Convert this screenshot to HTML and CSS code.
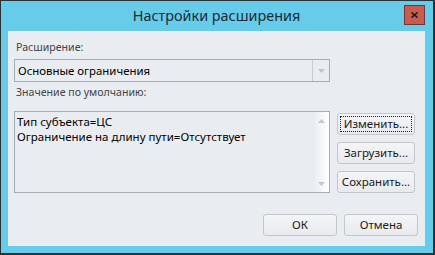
FILE: index.html
```html
<!DOCTYPE html>
<html lang="ru">
<head>
<meta charset="utf-8">
<title>Настройки расширения</title>
<link rel="stylesheet" href="styles.css">
</head>
<body>
<div class="window">
  <div class="titlebar">
    <div class="title">Настройки расширения</div>
    <button class="close" aria-label="Закрыть">
      <svg width="7" height="6" viewBox="0 0 7 6"><path d="M0.5 0.5 L6.5 5.5 M6.5 0.5 L0.5 5.5" stroke="#1a1a1a" stroke-width="1.6"/></svg>
    </button>
  </div>
  <div class="client">
    <div class="label">Расширение:</div>
    <div class="combo">
      <span class="combo-text">Основные ограничения</span>
      <span class="combo-btn"><svg width="7" height="4" viewBox="0 0 7 4"><path d="M0 0 H7 L3.5 4 Z" fill="#bfc2c6"/></svg></span>
    </div>
    <div class="label label2">Значение по умолчанию:</div>
    <div class="main-row">
      <div class="textbox">
        <div class="lines">
          <div>Тип субъекта=ЦС</div>
          <div>Ограничение на длину пути=Отсутствует</div>
        </div>
        <div class="scrollbar">
          <svg width="7" height="4" viewBox="0 0 7 4"><path d="M0 4 H7 L3.5 0 Z" fill="#c4c7cb"/></svg>
          <svg width="7" height="4" viewBox="0 0 7 4"><path d="M0 0 H7 L3.5 4 Z" fill="#c4c7cb"/></svg>
        </div>
      </div>
      <div class="side-buttons">
        <button class="btn focused"><span>Изменить...</span></button>
        <button class="btn"><span>Загрузить...</span></button>
        <button class="btn"><span>Сохранить...</span></button>
      </div>
    </div>
    <div class="footer">
      <button class="btn wide"><span>ОК</span></button>
      <button class="btn wide"><span>Отмена</span></button>
    </div>
  </div>
</div>
</body>
</html>
```
FILE: styles.css
```css
html, body {
  margin: 0;
  padding: 0;
  background: #2f3033;
}
body {
  width: 435px;
  height: 255px;
  overflow: hidden;
  font-family: "Noto Sans", "Open Sans", sans-serif;
}
.window {
  box-sizing: border-box;
  width: 435px;
  height: 255px;
  border-style: solid;
  border-color: #2f3033;
  border-width: 1px 2px 2px 1px;
  background: #67cbea;
  display: flex;
  flex-direction: column;
  padding: 0 8px 7px 7px;
}
.titlebar {
  height: 30px;
  display: grid;
  grid-template-columns: 1fr auto 1fr;
  align-items: start;
}
.title {
  grid-column: 2;
  font-size: 14.4px;
  line-height: 30px;
  color: #1c2a38;
  white-space: nowrap;
}
.close {
  grid-column: 3;
  justify-self: end;
  margin-top: 4px;
  width: 21px;
  height: 20px;
  padding: 0;
  border: 1px solid #6b3a34;
  background: #c75c50;
  display: flex;
  align-items: center;
  justify-content: center;
}
.client {
  flex: 1;
  background: #e9ecf1;
  padding: 9px 7px 0 6px;
  display: flex;
  flex-direction: column;
  font-size: 10.6px;
}
.label {
  color: #444;
  line-height: 15px;
  height: 15px;
  padding-left: 2px;
  white-space: nowrap;
}
.combo {
  margin-top: 4px;
  width: 316px;
  height: 23px;
  box-sizing: border-box;
  border: 1px solid #a9acb1;
  display: flex;
  align-items: stretch;
}
.combo-text {
  flex: 1;
  color: #000;
  font-size: 11.4px;
  line-height: 21px;
  padding-left: 3px;
}
.combo-btn {
  width: 16px;
  border-left: 1px solid #c9cbcf;
  display: flex;
  align-items: center;
  justify-content: center;
}
.label2 {
  margin-top: 3px;
}
.main-row {
  margin-top: 11px;
  display: flex;
  gap: 7px;
  align-items: flex-start;
}
.textbox {
  width: 316px;
  height: 82px;
  box-sizing: border-box;
  border: 1px solid #a9acb1;
  display: flex;
}
.lines {
  flex: 1;
  padding: 2px 0 0 2px;
  font-size: 11.5px;
  line-height: 15px;
  color: #000;
  white-space: nowrap;
}
.scrollbar {
  width: 16px;
  background: linear-gradient(to right, #e9ecf1, #ffffff);
  display: flex;
  flex-direction: column;
  justify-content: space-between;
  align-items: center;
  padding: 7px 0 6px;
}
.side-buttons {
  margin-top: 2px;
  display: flex;
  flex-direction: column;
  gap: 7px;
}
.btn {
  width: 78px;
  height: 22px;
  box-sizing: border-box;
  padding: 2px;
  border: 1px solid #c3c6cb;
  border-radius: 3px;
  background: linear-gradient(#f4f5f7, #e8eaee);
  font-family: "Noto Sans", "Open Sans", sans-serif;
  font-size: 11.5px;
  color: #1a1a1a;
  display: flex;
}
.btn span {
  flex: 1;
  display: flex;
  align-items: center;
  justify-content: center;
  border: 1px solid transparent;
  line-height: 14px;
}
.btn.focused span {
  border: 1px dotted #222;
}
.btn.wide {
  width: 74px;
}
.footer {
  margin-top: 21px;
  display: flex;
  justify-content: flex-end;
  gap: 7px;
}
```
